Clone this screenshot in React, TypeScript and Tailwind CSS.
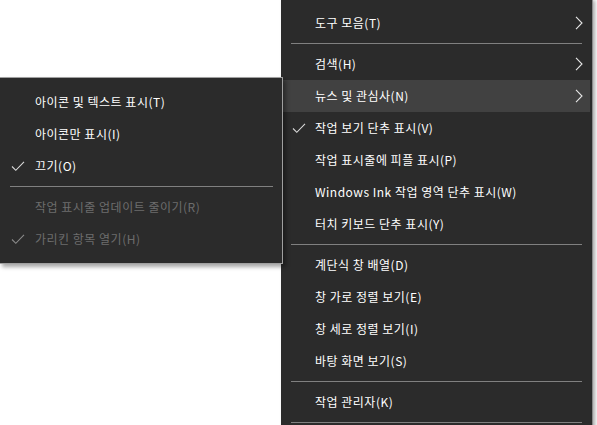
import React from "react";

type Item =
  | { kind: "sep" }
  | { kind: "item"; label: string; checked?: boolean; sub?: boolean; hover?: boolean; disabled?: boolean };

const rightItems: Item[] = [
  { kind: "item", label: "도구 모음(T)", sub: true },
  { kind: "sep" },
  { kind: "item", label: "검색(H)", sub: true },
  { kind: "item", label: "뉴스 및 관심사(N)", sub: true, hover: true },
  { kind: "item", label: "작업 보기 단추 표시(V)", checked: true },
  { kind: "item", label: "작업 표시줄에 피플 표시(P)" },
  { kind: "item", label: "Windows Ink 작업 영역 단추 표시(W)" },
  { kind: "item", label: "터치 키보드 단추 표시(Y)" },
  { kind: "sep" },
  { kind: "item", label: "계단식 창 배열(D)" },
  { kind: "item", label: "창 가로 정렬 보기(E)" },
  { kind: "item", label: "창 세로 정렬 보기(I)" },
  { kind: "item", label: "바탕 화면 보기(S)" },
  { kind: "sep" },
  { kind: "item", label: "작업 관리자(K)" },
  { kind: "sep" },
];

const leftItems: Item[] = [
  { kind: "item", label: "아이콘 및 텍스트 표시(T)" },
  { kind: "item", label: "아이콘만 표시(I)" },
  { kind: "item", label: "끄기(O)", checked: true },
  { kind: "sep" },
  { kind: "item", label: "작업 표시줄 업데이트 줄이기(R)", disabled: true },
  { kind: "item", label: "가리킨 항목 열기(H)", checked: true, disabled: true },
];

function Check({ disabled }: { disabled?: boolean }) {
  return (
    <svg width="14" height="12" viewBox="0 0 14 12" className="block">
      <path
        d="M1 6.5 L4.8 10.3 L13 1.8"
        fill="none"
        stroke={disabled ? "#8a8a8a" : "#d9d9d9"}
        strokeWidth="1.1"
      />
    </svg>
  );
}

function Chevron() {
  return (
    <svg width="8" height="14" viewBox="0 0 8 14" className="block">
      <path d="M1 0.8 L7 7 L1 13.2" fill="none" stroke="#e6e6e6" strokeWidth="1.1" />
    </svg>
  );
}

function Row({ item, wide }: { item: Extract<Item, { kind: "item" }>; wide?: boolean }) {
  return (
    <div className={`flex h-8 items-center ${item.hover ? "mr-[2px] bg-[#414141]" : ""}`}>
      <div className={`flex shrink-0 items-center pl-[11px] ${wide ? "w-[35px]" : "w-[34px]"}`}>
        {item.checked && <Check disabled={item.disabled} />}
      </div>
      <span
        className={`flex-1 whitespace-nowrap text-[12px] leading-none tracking-[0.5px] ${
          item.disabled ? "text-[#6d6d6d]" : "text-white"
        }`}
      >
        {item.label}
      </span>
      {item.sub && (
        <div className={`flex items-center ${item.hover ? "pr-[7px]" : "pr-[9px]"}`}>
          <Chevron />
        </div>
      )}
    </div>
  );
}

function Sep({ left }: { left?: boolean }) {
  return (
    <div className={`flex h-[9px] items-center ml-[10px] ${left ? "mr-[9px]" : "mr-[10px]"}`}>
      <div className="h-px w-full bg-[#808080]" />
    </div>
  );
}

export default function App() {
  return (
    <div className="relative h-[425px] w-[597px] overflow-hidden bg-white font-['Noto_Sans_CJK_KR','Malgun_Gothic',sans-serif]">
      {/* main taskbar context menu */}
      <div className="absolute left-[281px] top-0 flex h-[440px] w-[311px] flex-col bg-[#2b2b2b] pt-[7px] shadow-[1px_0_0_#8a8a8a,3px_0_4px_rgba(0,0,0,0.35)]">
        {rightItems.map((it, i) =>
          it.kind === "sep" ? <Sep key={i} /> : <Row key={i} item={it} />
        )}
      </div>

      {/* news & interests submenu */}
      <div className="absolute left-[-1px] top-[77px] flex h-[187px] w-[284px] flex-col border border-[#a0a0a0] bg-[#2b2b2b] pt-[8px] shadow-[3px_3px_4px_rgba(0,0,0,0.35)]">
        {leftItems.map((it, i) =>
          it.kind === "sep" ? <Sep key={i} left /> : <Row key={i} item={it} wide />
        )}
      </div>
    </div>
  );
}
